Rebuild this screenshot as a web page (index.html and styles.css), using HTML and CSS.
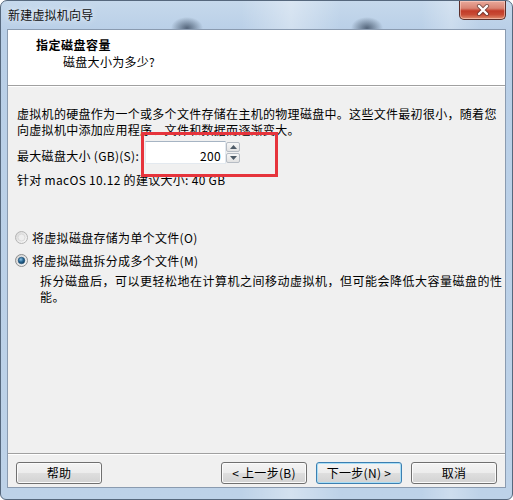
FILE: index.html
```html
<!DOCTYPE html>
<html lang="zh-CN">
<head>
<meta charset="utf-8">
<title>新建虚拟机向导</title>
<link rel="stylesheet" href="styles.css">
</head>
<body>
<div class="window">
  <div class="titlebar">
    <span class="title">新建虚拟机向导</span>
    <div class="close">
      <svg width="16" height="12" viewBox="0 0 16 12">
        <path d="M4 2 L12 10 M12 2 L4 10" stroke="#3a2a2a" stroke-width="4.2" stroke-linecap="round" fill="none" opacity="0.55"/>
        <path d="M4 2 L12 10 M12 2 L4 10" stroke="#ffffff" stroke-width="2.4" stroke-linecap="round" fill="none"/>
      </svg>
    </div>
  </div>
  <div class="client">
    <div class="header">
      <div class="h-title">指定磁盘容量</div>
      <div class="h-sub">磁盘大小为多少?</div>
    </div>
    <div class="body">
      <p class="intro">虚拟机的硬盘作为一个或多个文件存储在主机的物理磁盘中。这些文件最初很小，随着您<br>向虚拟机中添加应用程序、文件和数据而逐渐变大。</p>
      <div class="size-row">
        <label class="size-label">最大磁盘大小 (GB)(S):</label>
        <div class="spin">
          <div class="spin-input">200</div>
          <div class="spin-btns">
            <div class="spin-btn">
              <svg width="7" height="4" viewBox="0 0 7 4"><polygon points="0,4 3.5,0 7,4" fill="#4d5a66"/></svg>
            </div>
            <div class="spin-btn">
              <svg width="7" height="4" viewBox="0 0 7 4"><polygon points="0,0 7,0 3.5,4" fill="#4d5a66"/></svg>
            </div>
          </div>
          <div class="highlight"></div>
        </div>
      </div>
      <p class="recommend">针对 macOS 10.12 的建议大小: 40 GB</p>
      <div class="options">
        <div class="radio-row">
          <svg class="radio" width="13" height="13" viewBox="0 0 13 13">
            <defs>
              <linearGradient id="ru" x1="0" y1="0" x2="1" y2="1">
                <stop offset="0" stop-color="#d6d6d6"/>
                <stop offset="1" stop-color="#fbfbfb"/>
              </linearGradient>
            </defs>
            <circle cx="6.5" cy="6.5" r="6" fill="url(#ru)" stroke="#b4b4b4"/>
            <circle cx="6.5" cy="6.5" r="3.5" fill="#eeeeee" stroke="#d4d4d4" stroke-width="0.8"/>
          </svg>
          <span>将虚拟磁盘存储为单个文件(O)</span>
        </div>
        <div class="radio-row">
          <svg class="radio" width="13" height="13" viewBox="0 0 13 13">
            <defs>
              <linearGradient id="rc" x1="0" y1="0" x2="1" y2="1">
                <stop offset="0" stop-color="#cfcfcf"/>
                <stop offset="1" stop-color="#fafafa"/>
              </linearGradient>
              <radialGradient id="rd" cx="0.4" cy="0.35" r="0.7">
                <stop offset="0" stop-color="#8fc2e4"/>
                <stop offset="0.5" stop-color="#2a6a98"/>
                <stop offset="1" stop-color="#0d3552"/>
              </radialGradient>
            </defs>
            <circle cx="6.5" cy="6.5" r="6" fill="url(#rc)" stroke="#8e8f8f"/>
            <circle cx="6.5" cy="6.5" r="3.3" fill="url(#rd)" stroke="#1d4f75" stroke-width="0.6"/>
          </svg>
          <span>将虚拟磁盘拆分成多个文件(M)</span>
        </div>
        <p class="radio-desc">拆分磁盘后，可以更轻松地在计算机之间移动虚拟机，但可能会降低大容量磁盘的性<br>能。</p>
      </div>
    </div>
    <div class="footer">
      <button class="btn">帮助</button>
      <button class="btn btn-prev">&lt; 上一步(B)</button>
      <button class="btn btn-default">下一步(N) &gt;</button>
      <button class="btn">取消</button>
    </div>
  </div>
</div>
</body>
</html>
```

FILE: styles.css
```css
* { box-sizing: border-box; }

html, body {
  margin: 0;
  padding: 0;
  background: #ffffff;
}

body {
  width: 513px;
  height: 500px;
  overflow: hidden;
  font-family: "Noto Sans CJK SC", "Noto Sans", sans-serif;
  font-size: 12px;
  color: #000;
}

.window {
  width: 513px;
  height: 500px;
  border: 1px solid #56687d;
  border-radius: 7px 7px 6px 6px;
  padding: 0 6px 11px;
  display: flex;
  flex-direction: column;
  background:
    radial-gradient(ellipse 16px 11px at 186px 27px, rgba(30, 45, 65, 0.65), rgba(30, 45, 65, 0) 100%),
    radial-gradient(ellipse 16px 11px at 366px 27px, rgba(30, 45, 65, 0.65), rgba(30, 45, 65, 0) 100%),
    linear-gradient(to right,
      rgba(255,255,255,0.0) 0px,
      rgba(255,255,255,0.0) 240px,
      rgba(255,255,255,0.35) 290px,
      rgba(255,255,255,0.0) 340px,
      rgba(255,255,255,0.0) 420px,
      rgba(255,255,255,0.25) 450px,
      rgba(255,255,255,0.0) 480px),
    linear-gradient(to bottom, #c6d9ec 0px, #b9cfe7 30px, #bdd2e8 100%);
}

.titlebar {
  height: 28px;
  display: flex;
  align-items: flex-start;
  padding-left: 1px;
}

.title {
  line-height: 16px;
  margin-top: 6px;
  letter-spacing: 0.2px;
  color: #111;
  text-shadow: 0 0 6px rgba(255, 255, 255, 0.9);
}

.close {
  margin-left: auto;
  margin-right: 0;
  width: 47px;
  height: 19px;
  border: 1px solid #5b2f2a;
  border-top: none;
  border-radius: 0 0 5px 5px;
  display: flex;
  align-items: center;
  justify-content: center;
  background: linear-gradient(to bottom, #e9a99b 0%, #d98473 40%, #c23b28 55%, #c84a34 75%, #e08d6e 100%);
  box-shadow: inset 0 0 0 1px rgba(255, 220, 210, 0.5);
}

.client {
  flex: 1;
  display: flex;
  flex-direction: column;
  border: 1px solid #8a9bb0;
  background: #f0f0f0;
}

.header {
  height: 56px;
  background: #ffffff;
  border-bottom: 1px solid #a0a0a0;
  box-shadow: 0 1px 0 #ffffff;
  padding-top: 7px;
}

.h-title {
  padding-left: 28px;
  font-weight: bold;
  line-height: 16px;
  letter-spacing: 0.5px;
}

.h-sub {
  padding-left: 55px;
  line-height: 16px;
  margin-top: 1px;
  letter-spacing: 0.3px;
}

.body {
  flex: 1;
  padding: 20px 0 0 9px;
}

.intro {
  margin: 0;
  line-height: 16px;
  letter-spacing: 0.3px;
}

.size-row {
  display: flex;
  align-items: flex-start;
  margin-top: 3px;
}

.size-label {
  width: 128px;
  line-height: 16px;
  margin-top: 7px;
  letter-spacing: 0.3px;
}

.spin {
  position: relative;
  display: flex;
}

.spin-input {
  width: 81px;
  height: 23px;
  background: #ffffff;
  border: 1px solid #e3e9ef;
  border-top-color: #a6b4c3;
  text-align: right;
  padding: 6px 4px 0 0;
  line-height: 16px;
  letter-spacing: 0.3px;
}

.spin-btns {
  width: 14px;
  height: 23px;
  display: flex;
  flex-direction: column;
  gap: 1px;
  padding: 1px 0;
}

.spin-btn {
  flex: 1;
  border: 1px solid #b6bcc4;
  border-radius: 2px;
  background: linear-gradient(to bottom, #f7f7f7, #e2e2e2);
  display: flex;
  align-items: center;
  justify-content: center;
}

.highlight {
  position: absolute;
  left: -4px;
  top: -9px;
  width: 137px;
  height: 45px;
  border: 3px solid #e6343c;
  pointer-events: none;
}

.recommend {
  margin: 8px 0 0;
  line-height: 16px;
  letter-spacing: 0.3px;
}

.options {
  margin-top: 41px;
}

.radio-row {
  display: flex;
  align-items: center;
  height: 16px;
  margin-left: -2px;
  margin-bottom: 7px;
  letter-spacing: 0.3px;
}

.radio {
  flex: none;
  margin-right: 4px;
}

.radio-desc {
  margin: -2px 0 0 23px;
  line-height: 16px;
  letter-spacing: 0.5px;
}

.footer {
  height: 34px;
  border-top: 1px solid #a0a0a0;
  box-shadow: inset 0 1px 0 #ffffff;
  padding: 8px 8px 0 8px;
  display: flex;
  align-items: flex-start;
  gap: 9px;
}

.btn {
  width: 86px;
  height: 22px;
  padding: 0;
  font-family: "Noto Sans CJK SC", "Noto Sans", sans-serif;
  font-size: 12px;
  line-height: 16px;
  letter-spacing: 0.3px;
  color: #000;
  border: 1px solid #707070;
  border-radius: 3px;
  background: linear-gradient(to bottom, #f4f4f4 0%, #ececec 48%, #dedede 52%, #d2d2d2 100%);
  box-shadow: inset 0 0 0 1px #fbfbfb;
}

.btn-prev {
  margin-left: auto;
}

.btn-default {
  border-color: #3c7fb1;
  box-shadow: inset 0 0 0 1px #a9def6;
}
```
